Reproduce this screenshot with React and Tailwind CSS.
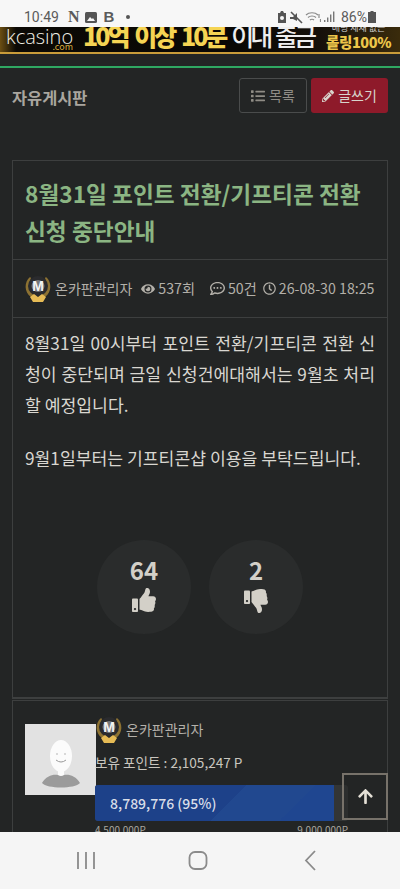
import { FaArrowUp, FaEye, FaList, FaPencilAlt, FaRegClock, FaRegCommentDots, FaThumbsDown, FaThumbsUp } from 'react-icons/fa';

function LevelBadge() {
  return (
    <svg width="28" height="29" viewBox="0 0 28 29" className="shrink-0">
      <path d="M6 3C0 8 0 18 7 23l5 2V22C7 19 4 12 7 4Z" fill="#8d7232" />
      <path d="M22 3c6 5 6 15-1 20l-5 2V22c5-3 8-10 5-18Z" fill="#8d7232" />
      <circle cx="14" cy="12" r="10" fill="#2a2b2e" />
      <ellipse cx="14" cy="12" rx="6.500" ry="6" fill="#77787a" />
      <text x="14" y="17" textAnchor="middle" fontSize="14" fontWeight="800" fill="#f4f4f4" fontFamily="Liberation Sans, sans-serif">M</text>
      <path d="M6 23l4-3 4 3 4-3 4 3-3 5H9Z" fill="#e6bb55" />
    </svg>
  );
}

function StatusBar() {
  return (
    <div className="flex h-[27px] items-center justify-between bg-[#f7f7f7] pl-[24px] pr-[23px] pt-[7px] text-[#5b5b5b]">
      <div className="flex items-center">
        <span className="text-[14px] font-['Roboto',sans-serif]">10:49</span>
        <span className="ml-[9px] text-[16px] font-bold leading-[16px] font-['Liberation_Serif',serif]">N</span>
        <svg width="12" height="11" viewBox="0 0 12 11" className="ml-[6px]">
          <rect width="12" height="11" rx="1.500" fill="#555" />
          <path d="M2 9l3-4 2 2 1-1 2 3Z" fill="#f7f7f7" />
        </svg>
        <span className="ml-[6px] text-[15px] font-black leading-[16px] font-['Liberation_Sans',sans-serif]">B</span>
        <span className="ml-[12px] h-[4px] w-[4px] rounded-full bg-[#555]" />
      </div>
      <div className="flex items-center">
        <svg width="10" height="12" viewBox="0 0 10 12">
          <path d="M1 2h2l1-2h2l1 2h2v10H1Z" fill="#555" />
          <circle cx="5" cy="7" r="2" fill="#f7f7f7" />
        </svg>
        <svg width="14" height="13" viewBox="0 0 14 13" className="ml-[2px]">
          <path d="M1 6h3l4-4v8L4 8H1Z" fill="#555" />
          <path d="M2 1l11 11" stroke="#555" strokeWidth="1.600" />
        </svg>
        <svg width="16" height="12" viewBox="0 0 16 12" className="ml-[2px]" fill="none" stroke="#8a8a8a" strokeWidth="1.200">
          <path d="M1 4c3-3 9-3 12 0M3 6.500c2-2 6-2 8 0M5 9c1-1 3-1 4 0" />
          <path d="M14 3v4M15.500 8v3" />
        </svg>
        <svg width="11" height="12" viewBox="0 0 11 12" className="ml-[3px]" fill="#777">
          <rect x="0" y="9" width="1.400" height="2" />
          <rect x="3" y="6.500" width="1.400" height="4.500" />
          <rect x="6" y="3.500" width="1.400" height="7.500" />
          <rect x="9" y="0.500" width="1.400" height="10.500" />
        </svg>
        <span className="ml-[6px] text-[14px] font-['Roboto',sans-serif]">86%</span>
        <svg width="8" height="12" viewBox="0 0 8 12" className="ml-[1px] mr-[1px]">
          <path d="M2.500 0h3v1H8v11H0V1h2.500Z" fill="#555" />
        </svg>
      </div>
    </div>
  );
}

function Banner() {
  return (
    <div className="flex h-[27px] items-center overflow-hidden border-b-2 border-[#c99c3a] bg-[linear-gradient(90deg,#6b4e12_0%,#0b0905_4%,#0a0805_60%,#15100a_80%,#3a2b0c_100%)] pl-[6px] font-['Noto_Sans_CJK_KR',sans-serif]">
      <div className="relative h-[25px] w-[67px] shrink-0">
        <span className="absolute left-0 top-[-2px] text-[20px] font-light leading-[24px] text-[#f0eee4] font-['Open_Sans',sans-serif]">kcasino</span>
        <span className="absolute right-0 top-[15px] text-[9px] leading-[10px] text-[#d6a93c]">.com</span>
      </div>
      <span className="ml-[10px] mt-[-9px] whitespace-nowrap text-[25px] font-black leading-[30px] tracking-[-3px] [word-spacing:4px] text-[#f5d453]">10억 이상 10분</span>
      <span className="ml-[6px] mt-[-9px] whitespace-nowrap text-[25px] font-medium leading-[30px] tracking-[-4px] [word-spacing:4px] text-[#eeeeee]">이내 출금</span>
      <div className="ml-[13px] flex flex-col items-center">
        <span className="mt-[-7px] whitespace-nowrap text-[9px] leading-[10px] text-[#cfcfcf]">배팅 제재 없는</span>
        <span className="mt-[1px] whitespace-nowrap text-[14.5px] font-black leading-[16px] tracking-[-0.4px] text-[#edc64a]">롤링100%</span>
      </div>
    </div>
  );
}

function VoteCircle({ count, children }) {
  return (
    <div className="flex h-[94px] w-[94px] flex-col items-center rounded-full bg-[#2a2c2c] pt-[14px] text-[#d3d0c8]">
      <span className="text-[24px] font-bold leading-[32px]">{count}</span>
      {children}
    </div>
  );
}

export default function App() {
  return (
    <div className="relative h-[889px] w-[400px] overflow-hidden bg-[#232525] font-['Noto_Sans_CJK_KR',sans-serif]">
      <StatusBar />
      <Banner />
      <div className="mt-[12px] h-[2px] bg-[#2fa862]" />

      {/* board header */}
      <div className="flex h-[92px] items-start justify-between px-[12px] pt-[10px]">
        <h2 className="mt-[8px] text-[16.4px] font-bold leading-[22px] text-[#a9a69f]">자유게시판</h2>
        <div className="flex gap-[4px]">
          <button className="flex h-[35px] w-[68px] items-center justify-center gap-[4px] rounded-[3px] border border-[#4a4c4c] text-[14px] text-[#8f8c85]">
            <FaList className="text-[14px]" /> 목록
          </button>
          <button className="flex h-[35px] w-[77px] items-center justify-center gap-[4px] rounded-[3px] bg-[#8e1a2a] text-[14px] text-[#d8d4cc]">
            <FaPencilAlt className="text-[12px]" /> 글쓰기
          </button>
        </div>
      </div>

      <div className="mx-[12px] border border-[#3d3f3f]">
        <div className="h-[99px] border-b border-[#3d3f3f] px-[12px] pt-[14px]">
          <h1 className="text-[22.7px] font-bold leading-[37px] text-[#8bb583]">8월31일 포인트 전환/기프티콘 전환 신청 중단안내</h1>
        </div>

        <div className="flex h-[58px] items-center whitespace-nowrap border-b border-[#3d3f3f] pl-[11px] text-[14.2px] text-[#b3b0a9]">
          <LevelBadge />
          <span className="ml-[3px] text-[14px]">온카판관리자</span>
          <FaEye className="ml-[9px] text-[14px]" />
          <span className="ml-[3px]">537회</span>
          <FaRegCommentDots className="ml-[15px] text-[15px]" />
          <span className="ml-[3px]">50건</span>
          <FaRegClock className="ml-[6px] text-[13px]" />
          <span className="ml-[3px]">26-08-30 18:25</span>
        </div>

        {/* post body */}
        <div className="h-[380px] border-b border-[#3d3f3f] px-[12px] pt-[9px] text-[17.2px] leading-[31px] text-[#d9d7d1] [word-break:break-all]">
          <p className="text-justify">8월31일 00시부터 포인트 전환/기프티콘 전환 신청이 중단되며 금일 신청건에대해서는 9월초 처리할 예정입니다.</p>
          <p className="mt-[22px]">9월1일부터는 기프티콘샵 이용을 부탁드립니다.</p>
          <div className="mt-[67px] flex justify-center gap-[18px]">
            <VoteCircle count="64">
              <FaThumbsUp className="mt-[2px] text-[24px]" />
            </VoteCircle>
            <VoteCircle count="2">
              <FaThumbsDown className="mt-[3px] text-[24px]" />
            </VoteCircle>
          </div>
        </div>
      </div>

      {/* writer profile */}
      <div className="mx-[12px] mt-[1px] flex border border-[#3d3f3f] pl-[12px] pt-[23px] pb-[40px]">
        <div className="flex h-[71px] w-[71px] shrink-0 items-end justify-center bg-[#e2e2e2]">
          <svg width="40" height="56" viewBox="0 -6 40 56">
            <ellipse cx="20" cy="11" rx="11" ry="16" fill="#fbfbfb" />
            <path d="M15 15q5 4 10 0" stroke="#999" strokeWidth="1" fill="none" />
            <circle cx="16" cy="9" r="0.800" fill="#aaa" />
            <circle cx="24" cy="9" r="0.800" fill="#aaa" />
            <rect x="17" y="24" width="6" height="8" fill="#fbfbfb" />
            <path d="M1 38C5 31 12 29 17 30q3 2 6 0c5-1 12 1 16 8-5 6-33 6-38 0Z" fill="#9b9b9b" />
          </svg>
        </div>
        <div className="ml-[-1px] min-w-0 flex-1">
          <div className="mt-[-9px] flex h-[29px] items-center text-[14px] text-[#b3b0a9]">
            <LevelBadge />
            <span className="ml-[3px]">온카판관리자</span>
          </div>
          <p className="mt-[8px] text-[13.6px] leading-[20px] text-[#c9c6bf]">보유 포인트 : 2,105,247 P</p>
          <div className="mt-[13px] h-[36px] w-[253px] overflow-hidden rounded-[3px] bg-[#333535]">
            <div className="flex h-full w-[239px] items-center bg-[linear-gradient(135deg,#1d4189_0%,#1d4189_55%,#21488f_55%,#21488f_80%,#1f4690_80%)] pl-[15px] text-[14px] font-medium text-[#d9dee8]">8,789,776 (95%)</div>
          </div>
          <div className="mt-[2px] flex w-[253px] justify-between text-[10px] leading-[14px] text-[#a9a69f]">
            <span>4,500,000P</span>
            <span>9,000,000P</span>
          </div>
        </div>
      </div>

      {/* scroll to top */}
      <button className="absolute left-[342px] top-[773px] flex h-[47px] w-[46px] items-center justify-center border-2 border-[#77726a] bg-[#232525]/40 text-[#e4e0d6]">
        <FaArrowUp className="text-[17px]" />
      </button>

      {/* android nav bar */}
      <div className="absolute bottom-0 left-0 right-0 flex h-[57px] items-center bg-[#f5f5f5]">
        <svg width="400" height="30" viewBox="0 0 400 30" fill="none" stroke="#8b8b8b" strokeWidth="1.800">
          <path d="M78 6v17M86 6v17M94 6v17" />
          <rect x="189.500" y="6" width="17" height="17" rx="5.500" />
          <path d="M315 5l-9 9.500 9 9.500" />
        </svg>
      </div>
    </div>
  );
}
